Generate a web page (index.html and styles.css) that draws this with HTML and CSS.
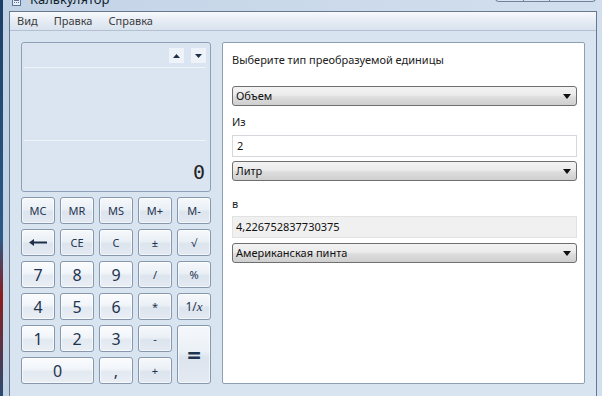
FILE: index.html
```html
<!DOCTYPE html>
<html lang="ru">
<head>
<meta charset="utf-8">
<title>Калькулятор</title>
<link rel="stylesheet" href="styles.css">
</head>
<body>
<div class="window">
  <div class="titlebar">
    <svg class="appicon" width="9" height="8" viewBox="0 0 9 8"><rect x="0.5" y="0.5" width="8" height="7" fill="#e8eef6" stroke="#5a7396"/><rect x="2" y="2" width="5" height="1" fill="#5a7396"/><rect x="2" y="4" width="1" height="1" fill="#5a7396"/><rect x="4" y="4" width="1" height="1" fill="#5a7396"/><rect x="6" y="4" width="1" height="1" fill="#5a7396"/></svg>
    <span class="title">Калькулятор</span>
    <div class="caption">
      <span class="cap cap-min"></span><span class="cap cap-max"></span><span class="cap cap-close"></span>
    </div>
  </div>
  <div class="client">
    <div class="menubar">
      <span class="menu">Вид</span>
      <span class="menu">Правка</span>
      <span class="menu">Справка</span>
    </div>
    <div class="content">
      <div class="calc">
        <div class="display">
          <div class="disp-top">
            <span class="arrow-btn"><svg width="7" height="4" viewBox="0 0 7 4"><path d="M0 4 L3.5 0 L7 4 Z" fill="#1e2f4a"/></svg></span>
            <span class="arrow-btn"><svg width="7" height="4" viewBox="0 0 7 4"><path d="M0 0 L7 0 L3.5 4 Z" fill="#1e2f4a"/></svg></span>
          </div>
          <div class="disp-mid"></div>
          <div class="disp-value">0</div>
        </div>
        <div class="keys">
          <button class="key small">MC</button>
          <button class="key small">MR</button>
          <button class="key small">MS</button>
          <button class="key small">M+</button>
          <button class="key small">M-</button>
          <button class="key"><svg width="18" height="7" viewBox="0 0 18 7"><path d="M0 3.5 L5 0 L5 2.5 L18 2.5 L18 4.5 L5 4.5 L5 7 Z" fill="#1e2f4a"/></svg></button>
          <button class="key small">CE</button>
          <button class="key small">C</button>
          <button class="key small">±</button>
          <button class="key small">√</button>
          <button class="key digit">7</button>
          <button class="key digit">8</button>
          <button class="key digit">9</button>
          <button class="key small">/</button>
          <button class="key small">%</button>
          <button class="key digit">4</button>
          <button class="key digit">5</button>
          <button class="key digit">6</button>
          <button class="key small">*</button>
          <button class="key small inv">1/<i>x</i></button>
          <button class="key digit">1</button>
          <button class="key digit">2</button>
          <button class="key digit">3</button>
          <button class="key small">-</button>
          <button class="key equals">=</button>
          <button class="key digit zero">0</button>
          <button class="key digit">,</button>
          <button class="key small">+</button>
        </div>
      </div>
      <div class="panel">
        <div class="label first">Выберите тип преобразуемой единицы</div>
        <div class="select s1"><span>Объем</span><svg width="8" height="5" viewBox="0 0 8 5"><path d="M0 0 L8 0 L4 5 Z" fill="#111"/></svg></div>
        <div class="label l2">Из</div>
        <div class="field">2</div>
        <div class="select s2"><span>Литр</span><svg width="8" height="5" viewBox="0 0 8 5"><path d="M0 0 L8 0 L4 5 Z" fill="#111"/></svg></div>
        <div class="label l3">в</div>
        <div class="field output">4,226752837730375</div>
        <div class="select s3"><span>Американская пинта</span><svg width="8" height="5" viewBox="0 0 8 5"><path d="M0 0 L8 0 L4 5 Z" fill="#111"/></svg></div>
      </div>
    </div>
  </div>
</div>
</body>
</html>
```
FILE: styles.css
```css
* { box-sizing: border-box; }
html, body { margin: 0; padding: 0; }
body {
  width: 602px;
  height: 396px;
  overflow: hidden;
  background: linear-gradient(#1d3f66 0%, #2b5a86 60%, #8a1c1c 75%, #2a4a70 100%);
  font-family: "Noto Sans", "Open Sans", sans-serif;
}
.window {
  margin-left: 3px;
  width: 599px;
  height: 396px;
  background: linear-gradient(90deg, #c3d3e6, #d2dfee);
  padding: 0 5px 0 6px;
  display: flex;
  flex-direction: column;
}
.titlebar {
  height: 11px;
  display: flex;
  align-items: flex-start;
  overflow: hidden;
}
.appicon { margin: -2px 0 0 3px; }
.title {
  margin: -9px 0 0 9px;
  font-size: 13px;
  line-height: 16px;
  color: #0f1e30;
}
.caption {
  margin-left: auto;
  margin-right: 1px;
  display: flex;
  margin-top: -10px;
}
.cap {
  height: 12px;
  border: 1px solid #6f829a;
  border-top: none;
  background: #d8e3ef;
}
.cap-min { width: 29px; border-radius: 0 0 0 4px; }
.cap-max { width: 26px; border-left: none; }
.cap-close { width: 46px; border-left: none; border-radius: 0 0 4px 0; }
.client {
  flex: 1;
  border: 1px solid #67788e;
  border-bottom: none;
  background: #d9e4f1;
  display: flex;
  flex-direction: column;
}
.menubar {
  height: 19px;
  background: linear-gradient(#f7f9fc, #e3eaf3 60%, #d9e2ee);
  border-bottom: 1px solid #b3c0d1;
  display: flex;
  align-items: center;
  padding-left: 7px;
  gap: 16px;
}
.menu {
  font-size: 11px;
  color: #3c3c3c;
  line-height: 16px;
}
.content {
  display: flex;
  padding: 11px 11px 0 11px;
  gap: 11px;
}
.calc {
  width: 190px;
  display: flex;
  flex-direction: column;
  gap: 5px;
}
.display {
  height: 150px;
  border: 1px solid #8ea0b7;
  border-radius: 3px;
  background: #dbe5f1;
  display: flex;
  flex-direction: column;
  padding: 0 4px 0 2px;
}
.disp-top {
  height: 25px;
  border-bottom: 1px solid #eef3f9;
  display: flex;
  justify-content: flex-end;
  align-items: flex-start;
  gap: 7px;
  padding-top: 5px;
}
.arrow-btn {
  width: 15px;
  height: 15px;
  background: #eef3f9;
  display: flex;
  align-items: center;
  justify-content: center;
}
.disp-mid {
  height: 73px;
  border-bottom: 1px solid #eef3f9;
}
.disp-value {
  flex: 1;
  text-align: right;
  font-family: "DejaVu Sans Mono", monospace;
  font-size: 20px;
  line-height: 20px;
  padding-top: 21px;
  padding-right: 1px;
  color: #222;
}
.keys {
  display: grid;
  grid-template-columns: repeat(5, 34px);
  grid-template-rows: repeat(6, 27px);
  column-gap: 5px;
  row-gap: 5px;
}
.key {
  margin: 0;
  padding: 0;
  border: 1px solid #8797ad;
  border-radius: 3px;
  background: linear-gradient(#f6f8fb 0%, #eaf0f6 45%, #dce4ee 55%, #e4eaf2 100%);
  color: #1e3350;
  font-family: "Noto Sans", "Open Sans", sans-serif;
  display: flex;
  align-items: center;
  justify-content: center;
  box-shadow: inset 0 0 0 1px rgba(255,255,255,0.6);
}
.key.small { font-size: 11px; }
.key.digit { font-size: 16px; background: linear-gradient(#fbfcfe 0%, #f1f5f9 45%, #e3e9f1 55%, #eaeff5 100%); }
.key.inv { font-size: 12px; }
.key.inv i { font-family: "Liberation Serif", serif; font-size: 13px; }
.key.zero { grid-column: 1 / span 2; }
.key.equals {
  grid-column: 5;
  grid-row: 5 / span 2;
  font-size: 24px;
  font-weight: bold;
}
.panel {
  width: 363px;
  height: 342px;
  border: 1px solid #8f9fb3;
  border-radius: 2px;
  background: #fff;
  padding: 9px 7px 0 9px;
  display: flex;
  flex-direction: column;
}
.label {
  font-size: 11px;
  line-height: 16px;
  color: #222;
}
.select {
  height: 20px;
  border: 1px solid #6f6f6f;
  border-radius: 3px;
  background: linear-gradient(#f3f3f3 0%, #ebebeb 45%, #dddddd 55%, #cfcfcf 100%);
  display: flex;
  align-items: center;
  justify-content: space-between;
  padding: 0 5px 0 3px;
  font-size: 11px;
  color: #111;
}
.select span { line-height: 16px; }
.s1 { margin-top: 18px; }
.l2 { margin-top: 8px; }
.field {
  margin-top: 5px;
  height: 22px;
  border: 1px solid #d5d9de;
  background: #fff;
  font-size: 11px;
  line-height: 20px;
  padding-left: 4px;
  color: #111;
}
.s2 { margin-top: 4px; }
.l3 { margin-top: 15px; }
.field.output {
  margin-top: 4px;
  background: #f0f0f0;
  border-color: #e2e2e2;
  padding-left: 3px;
}
.s3 { margin-top: 5px; }
```
